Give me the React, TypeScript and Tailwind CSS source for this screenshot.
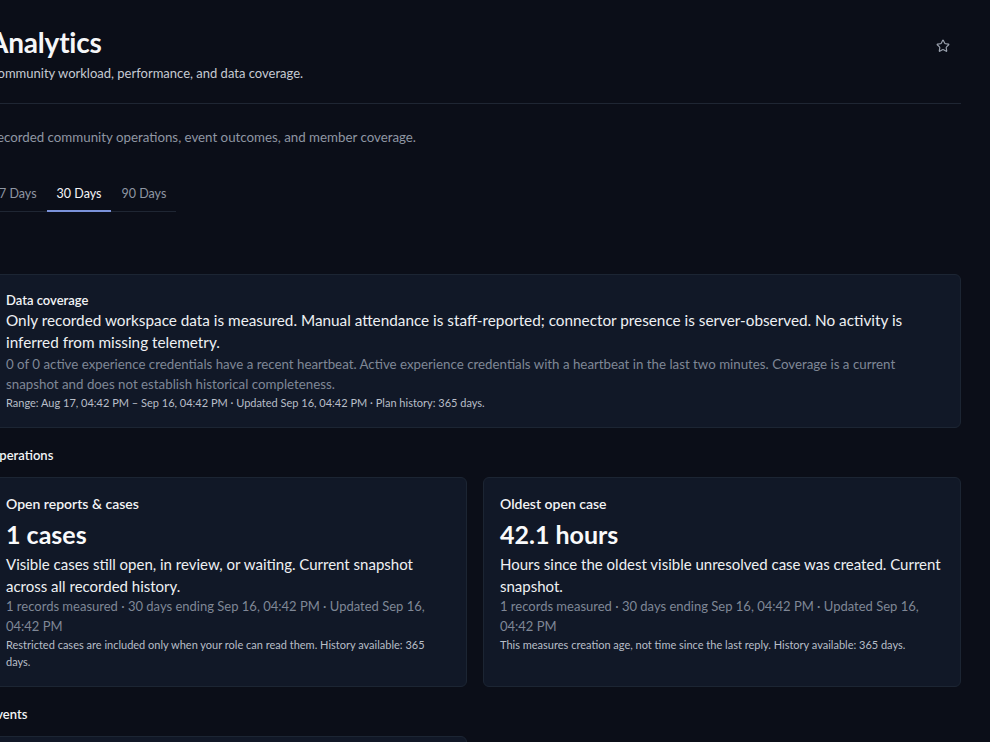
import React from "react";
import { Star } from "lucide-react";

const font = { fontFamily: "Lato, 'Noto Sans', sans-serif" };

function MetricCard({
  title,
  value,
  desc,
  meta,
  note,
}: {
  title: string;
  value: string;
  desc: string;
  meta: string;
  note: string;
}) {
  return (
    <div className="rounded-md border border-[#1c2533] bg-[#111827] px-4 pt-4 pb-4">
      <div className="text-[14px] leading-5 font-semibold text-[#f3f4f6]">{title}</div>
      <div className="mt-1 text-[25px] leading-8 font-bold text-[#f9fafb]">{value}</div>
      <div className="mt-[3px] text-[15px] leading-[22px] text-[#eef0f3]">{desc}</div>
      <div className="text-[13px] leading-[19.5px] text-[#7f8796]">{meta}</div>
      <div className="text-[11px] leading-[17px] text-[#b8bec8]">{note}</div>
    </div>
  );
}

export default function App() {
  return (
    <div className="min-h-screen w-full overflow-hidden bg-[#0b0e18]" style={font}>
      <div className="ml-[-11px] w-[972px] pt-6">
        <div className="flex items-start justify-between border-b border-[#1f2633] pb-5">
          <div>
            <h1 className="text-[28px] leading-9 font-bold tracking-[-0.2px] text-[#f5f6f8]">Analytics</h1>
            <p className="mt-[3px] text-[13px] leading-5 text-[#c6cad2]">
              Community workload, performance, and data coverage.
            </p>
          </div>
          <button className="mt-1 flex h-9 w-9 items-center justify-center text-[#9aa1ad]">
            <Star size={14} strokeWidth={2} />
          </button>
        </div>

        <p className="mt-[23px] text-[13.3px] leading-5 text-[#8f96a3]">
          Recorded community operations, event outcomes, and member coverage.
        </p>

        <div className="mt-[27px] inline-flex border-b border-[#1f2633]">
          <button className="-mb-px border-b-2 border-transparent px-[10px] pt-[10px] pb-[6px] text-[12.5px] leading-5 text-[#8f96a3]">
            7 Days
          </button>
          <button className="-mb-px border-b-2 border-[#7b92da] px-[10px] pt-[10px] pb-[6px] text-[12.5px] leading-5 text-[#f5f6f8]">
            30 Days
          </button>
          <button className="-mb-px border-b-2 border-transparent px-[10px] pt-[10px] pb-[6px] text-[12.5px] leading-5 text-[#8f96a3]">
            90 Days
          </button>
        </div>

        <div className="mt-[62px] rounded-md border border-[#1c2533] bg-[#111827] px-4 pt-4 pb-4">
          <div className="text-[13px] leading-[18px] font-semibold text-[#f3f4f6]">Data coverage</div>
          <div className="text-[15.3px] leading-[22px] text-[#eef0f3]">
            Only recorded workspace data is measured. Manual attendance is staff-reported; connector presence is
            server-observed. No activity is inferred from missing telemetry.
          </div>
          <div className="mt-[2px] text-[13.3px] leading-[19.5px] text-[#7f8796]">
            0 of 0 active experience credentials have a recent heartbeat. Active experience credentials with a
            heartbeat in the last two minutes. Coverage is a current snapshot and does not establish historical
            completeness.
          </div>
          <div className="text-[11px] leading-[17px] text-[#b8bec8]">
            Range: Aug 17, 04:42 PM – Sep 16, 04:42 PM · Updated Sep 16, 04:42 PM · Plan history: 365 days.
          </div>
        </div>

        <h2 className="mt-[17px] text-[13px] leading-5 font-semibold text-[#f3f4f6]">Operations</h2>
        <div className="mt-3 grid grid-cols-2 gap-4">
          <MetricCard
            title="Open reports & cases"
            value="1 cases"
            desc="Visible cases still open, in review, or waiting. Current snapshot across all recorded history."
            meta="1 records measured · 30 days ending Sep 16, 04:42 PM · Updated Sep 16, 04:42 PM"
            note="Restricted cases are included only when your role can read them. History available: 365 days."
          />
          <MetricCard
            title="Oldest open case"
            value="42.1 hours"
            desc="Hours since the oldest visible unresolved case was created. Current snapshot."
            meta="1 records measured · 30 days ending Sep 16, 04:42 PM · Updated Sep 16, 04:42 PM"
            note="This measures creation age, not time since the last reply. History available: 365 days."
          />
        </div>

        <h2 className="mt-[17px] text-[13px] leading-5 font-semibold text-[#f3f4f6]">Events</h2>
        <div className="mt-3 grid grid-cols-2 gap-4">
          <div className="h-[200px] rounded-md border border-[#1c2533] bg-[#111827]" />
        </div>
      </div>
    </div>
  );
}
